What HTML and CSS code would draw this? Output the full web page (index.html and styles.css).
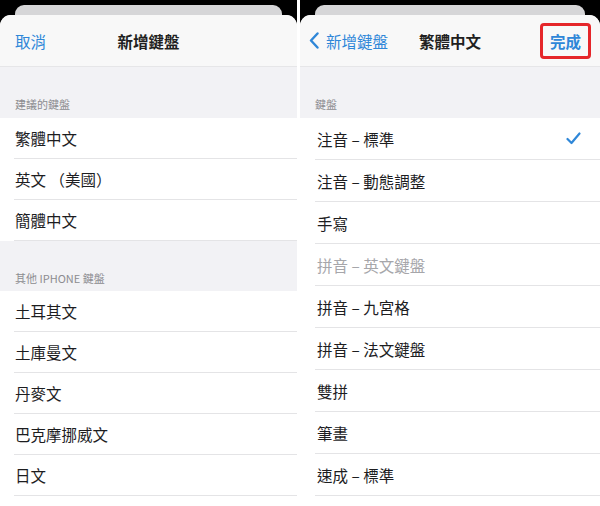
FILE: index.html
```html
<!DOCTYPE html>
<html lang="zh-Hant">

<head>
    <meta charset="UTF-8">
    <meta name="viewport" content="width=device-width, initial-scale=1.0">
    <title>新增鍵盤</title>
    <link rel="stylesheet" href="styles.css">
</head>

<body>
    <div class="screens">

        <!-- left: add keyboard list -->
        <section class="phone phone-left">
            <div class="back-card"></div>
            <div class="sheet">
                <div class="nav">
                    <div class="nav-left"><span class="link">取消</span></div>
                    <div class="nav-title">新增鍵盤</div>
                    <div class="nav-right"></div>
                </div>

                <div class="group-head">建議的鍵盤</div>
                <ul class="list">
                    <li class="row">繁體中文</li>
                    <li class="row">英文 （美國）</li>
                    <li class="row">簡體中文</li>
                </ul>

                <div class="group-head group-head-2">其他 IPHONE 鍵盤</div>
                <ul class="list">
                    <li class="row">土耳其文</li>
                    <li class="row">土庫曼文</li>
                    <li class="row">丹麥文</li>
                    <li class="row">巴克摩挪威文</li>
                    <li class="row">日文</li>
                </ul>
            </div>
        </section>

        <!-- right: traditional chinese layouts -->
        <section class="phone phone-right">
            <div class="back-card"></div>
            <div class="sheet">
                <div class="nav">
                    <div class="nav-left">
                        <span class="link back">
                            <svg class="chevron" width="10" height="17" viewBox="0 0 10 17">
                                <polyline points="8.5,1.5 2,8.5 8.5,15.5" fill="none" stroke="#2f87d8" stroke-width="2.4" stroke-linecap="round" stroke-linejoin="round" />
                            </svg>
                            新增鍵盤
                        </span>
                    </div>
                    <div class="nav-title">繁體中文</div>
                    <div class="nav-right">
                        <span class="link done">完成</span>
                    </div>
                </div>

                <div class="group-head">鍵盤</div>
                <ul class="list list-tall">
                    <li class="row">注音 – 標準
                        <svg class="check" width="15" height="13" viewBox="0 0 15 13">
                            <polyline points="1.5,7 5.5,11 13.5,1.5" fill="none" stroke="#2f87d8" stroke-width="2.2" stroke-linecap="round" stroke-linejoin="round" />
                        </svg>
                    </li>
                    <li class="row">注音 – 動態調整</li>
                    <li class="row">手寫</li>
                    <li class="row row-off">拼音 – 英文鍵盤</li>
                    <li class="row">拼音 – 九宮格</li>
                    <li class="row">拼音 – 法文鍵盤</li>
                    <li class="row">雙拼</li>
                    <li class="row">筆畫</li>
                    <li class="row">速成 – 標準</li>
                    <li class="row"></li>
                </ul>
            </div>
        </section>

    </div>
</body>

</html>
```

FILE: styles.css
```css
body {
    margin: 0;
    background-color: #ffffff;
    font-family: "Noto Sans CJK TC", "Noto Sans", sans-serif;
    color: #1d1d1f;
}

.screens {
    display: flex;
    gap: 3px;
    width: 600px;
    height: 506px;
    overflow: hidden;
}

.phone {
    background-color: #000000;
    overflow: hidden;
    height: 506px;
}

.phone-left {
    width: 297px;
}

.phone-right {
    width: 300px;
}

.back-card {
    margin: 5px 15px 0;
    height: 10px;
    border-radius: 9px 9px 0 0;
    background-color: #d6d6d8;
}

.sheet {
    background-color: #ffffff;
    border-radius: 11px 11px 0 0;
    height: 491px;
    overflow: hidden;
}

.nav {
    display: grid;
    grid-template-columns: 1fr auto 1fr;
    align-items: center;
    height: 51px;
    background-color: #f8f8f8;
    border-bottom: 1px solid #e6e6e8;
}

.nav-left {
    padding-left: 15px;
}

.phone-right .nav-left {
    padding-left: 9px;
}

.nav-right {
    display: flex;
    justify-content: flex-end;
    padding-right: 9px;
}

.nav-title {
    font-size: 15.5px;
    font-weight: 700;
    color: #1f1f21;
}

.link {
    font-size: 15.5px;
    color: #2f87d8;
}

.back {
    display: flex;
    align-items: center;
    gap: 7px;
}

.done {
    font-weight: 700;
    padding: 4px 7px;
    border: 3px solid #e5262a;
    border-radius: 4px;
}

.group-head {
    height: 51px;
    box-sizing: border-box;
    display: flex;
    align-items: flex-end;
    padding: 0 15px 6px;
    font-size: 11px;
    color: #8c8c90;
    background-color: #f2f2f5;
}

.group-head-2 {
    height: 50px;
    padding-bottom: 5px;
}

.list {
    list-style: none;
    margin: 0;
    padding: 0;
    background-color: #ffffff;
}

.row {
    display: flex;
    align-items: center;
    justify-content: space-between;
    height: 41px;
    box-sizing: border-box;
    margin-left: 14px;
    padding: 0 19px 0 1px;
    border-bottom: 1px solid #e4e4e6;
    font-size: 15.5px;
}

.list-tall .row {
    height: 42px;
    margin-left: 15px;
    padding-left: 2px;
}

.row-off {
    color: #a6a6aa;
}
```
